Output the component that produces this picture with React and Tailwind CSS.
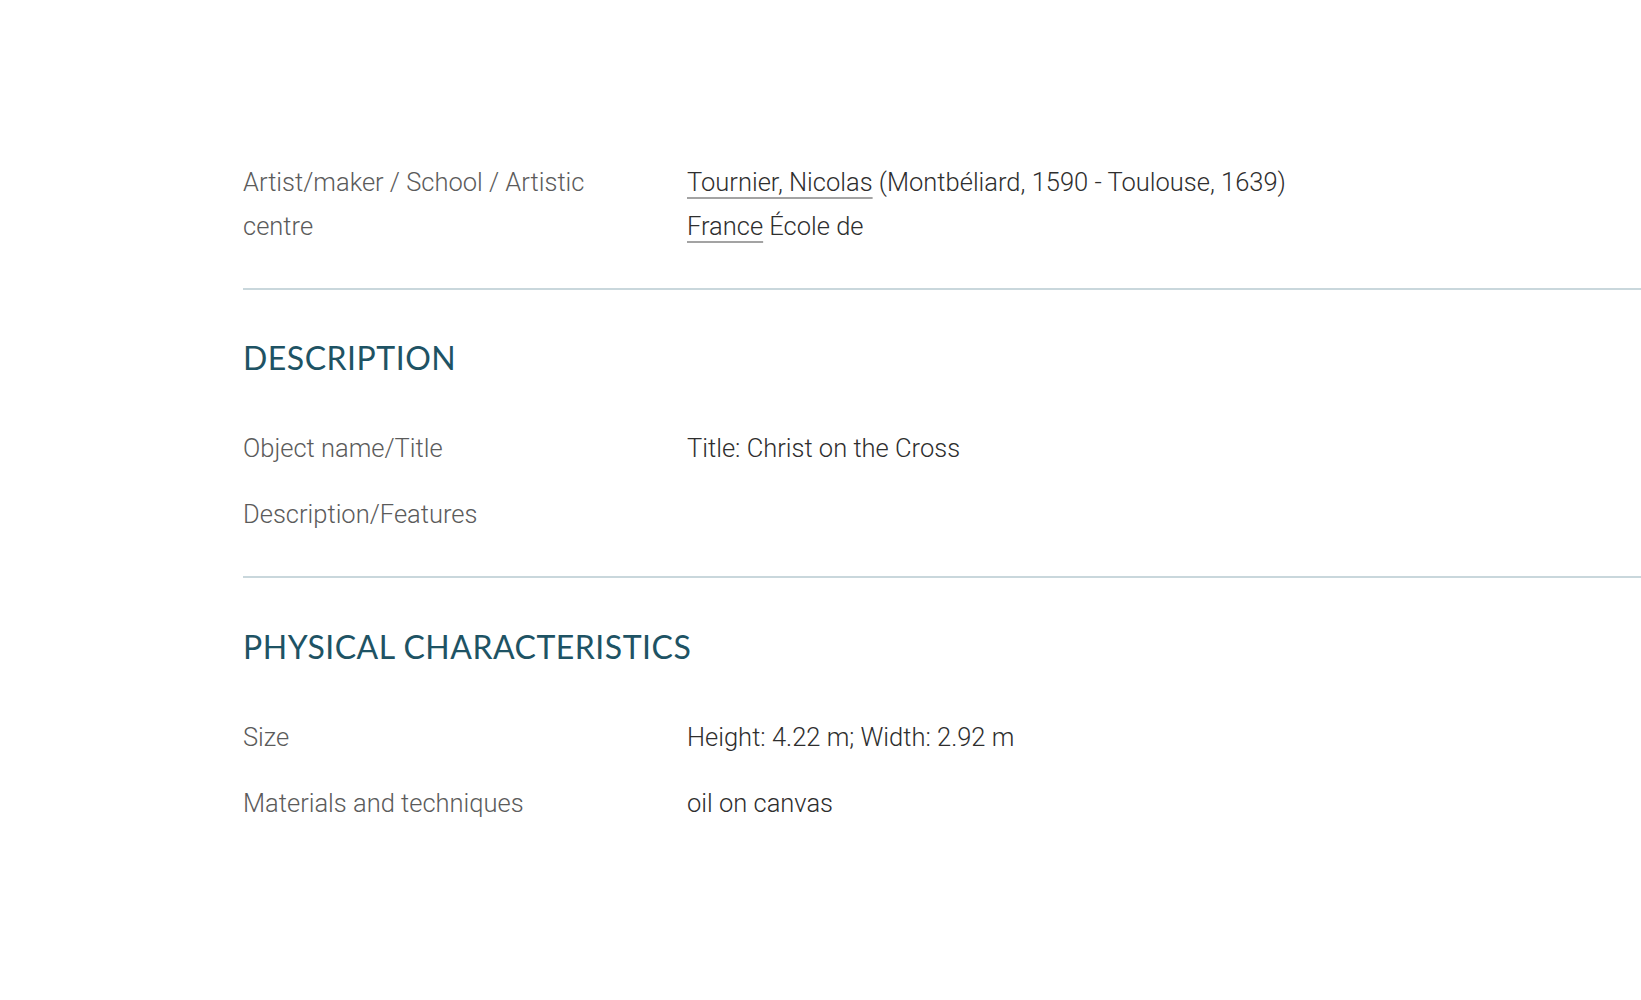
import React from "react";

const rows = {
  description: [
    { label: "Object name/Title", value: "Title: Christ on the Cross" },
    { label: "Description/Features", value: "" },
  ],
  physical: [
    { label: "Size", value: "Height: 4.22 m; Width: 2.92 m" },
    { label: "Materials and techniques", value: "oil on canvas" },
  ],
};

const Row = ({ label, children }) => (
  <div className="flex text-[25.5px] leading-[44px] font-light">
    <div className="w-[444px] shrink-0 pr-8 text-[#5b5b5b]">{label}</div>
    <div className="text-[#2e2e2e]">{children}</div>
  </div>
);

const LinkText = ({ children }) => (
  <a
    href="#"
    className="text-[#2e2e2e] underline decoration-[#a3a3a3] decoration-2 underline-offset-[6px]"
  >
    {children}
  </a>
);

const Heading = ({ children, className = "" }) => (
  <h2
    className={
      "mb-[48px] text-[32px] leading-[40px] font-normal tracking-[0.5px] text-[#1e5364] font-['Lato',sans-serif] " +
      className
    }
  >
    {children}
  </h2>
);

const App = () => {
  return (
    <div className="min-h-screen bg-white font-['Roboto',sans-serif] pt-[160px] pl-[243px]">
      <div className="flex text-[25.5px] leading-[44px] font-light">
        <div className="w-[444px] shrink-0 pr-[80px] text-[#5b5b5b]">
          Artist/maker / School / Artistic centre
        </div>
        <div className="text-[#2e2e2e]">
          <div>
            <LinkText>Tournier, Nicolas</LinkText> (Montbéliard, 1590 - Toulouse, 1639)
          </div>
          <div>
            <LinkText>France</LinkText> École de
          </div>
        </div>
      </div>

      <hr className="mt-[40px] border-0 h-[2px] bg-[#c9d7dc]" />

      <Heading className="mt-[48px]">DESCRIPTION</Heading>
      <div className="flex flex-col gap-[22px]">
        {rows.description.map((r) => (
          <Row key={r.label} label={r.label}>
            {r.value}
          </Row>
        ))}
      </div>

      <hr className="mt-[40px] border-0 h-[2px] bg-[#c9d7dc]" />

      <Heading className="mt-[49px]">PHYSICAL CHARACTERISTICS</Heading>
      <div className="flex flex-col gap-[22px] pb-[150px]">
        {rows.physical.map((r) => (
          <Row key={r.label} label={r.label}>
            {r.value}
          </Row>
        ))}
      </div>
    </div>
  );
};

export default App;
